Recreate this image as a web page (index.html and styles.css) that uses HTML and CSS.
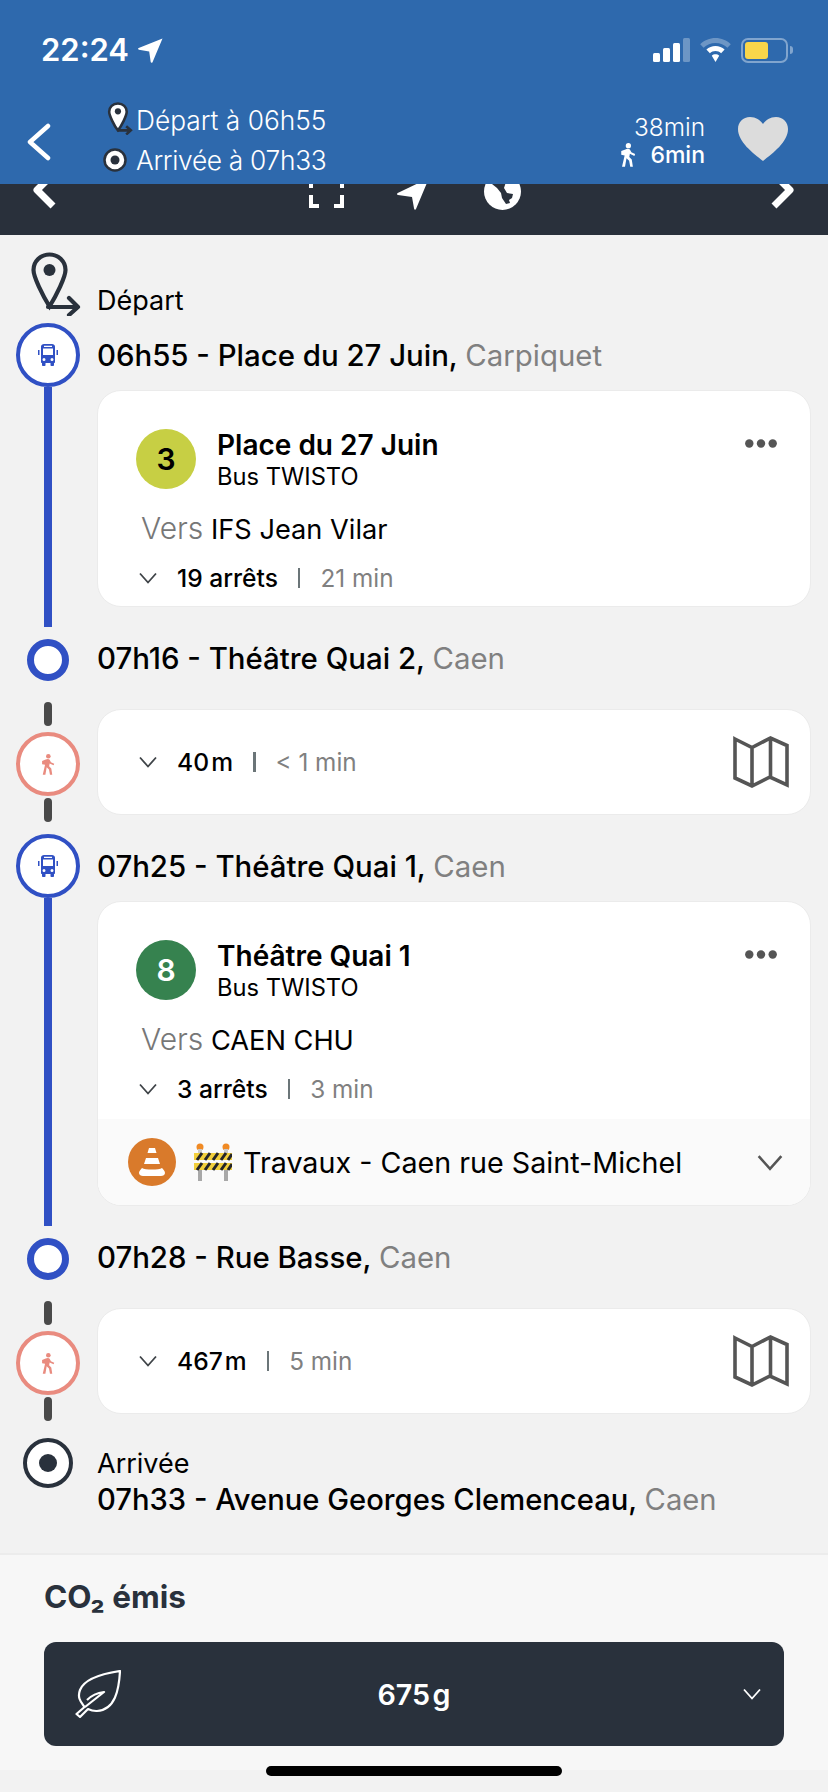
FILE: index.html
```html
<!DOCTYPE html>
<html lang="fr">
<head>
	<meta charset="utf-8">
	<title>Itinéraire</title>
	<link rel="stylesheet" href="styles.css">
</head>
<body>
<svg class="defs" width="0" height="0">
	<symbol id="i-bus" viewBox="0 0 24 24">
		<path fill="currentColor" d="M5 3.500C5 2 6.500 1 8 1h8c1.500 0 3 1 3 2.500V19c0 .6-.4 1-1 1v2.200c0 .5-.4.8-.8.8h-1.900c-.5 0-.8-.3-.8-.8V20H9.500v2.200c0 .5-.3.8-.8.8H6.800c-.4 0-.8-.3-.8-.8V20c-.6 0-1-.4-1-1zM7 5.500V12h10V5.500zM8 2.800v1.200h8V2.800zM8 15a1.500 1.500 0 1 0 0 3 1.500 1.500 0 0 0 0-3zm8 0a1.500 1.500 0 1 0 0 3 1.500 1.500 0 0 0 0-3z"/>
		<path fill="currentColor" d="M2 7h1.500v5H2zM20.500 7H22v5h-1.500z"/>
	</symbol>
	<symbol id="i-walk" viewBox="0 0 24 32">
		<circle cx="12.500" cy="3.500" r="3.500" fill="currentColor"/>
		<path fill="currentColor" d="M8.500 8.500c2-1.200 5-1.200 6 .3l2 3.600 5 2.300-1 2.500-6-2.800-.8 4.200 3.300 3.500 1.500 9.400h-3.500l-1.500-8-3.500-3.200-2 11.200H4L7.500 16.500 3 15.500v-5z"/>
	</symbol>
	<symbol id="i-map" viewBox="0 0 56 52">
		<path fill="none" stroke="currentColor" stroke-width="3.600" d="M2 3l17 8.500L37.500 2 54 9.500V49l-17-8-18 9-17-8zM19 11.500V50M37.500 2v39"/>
	</symbol>
	<symbol id="i-chev" viewBox="0 0 18 12">
		<path fill="none" stroke="currentColor" stroke-width="1.800" d="M1 1.500l8 9 8-9"/>
	</symbol>
	<symbol id="i-dots" viewBox="0 0 32 9">
		<circle cx="4.300" cy="4.500" r="4.200" fill="currentColor"/>
		<circle cx="16" cy="4.500" r="4.200" fill="currentColor"/>
		<circle cx="27.700" cy="4.500" r="4.200" fill="currentColor"/>
	</symbol>
</svg>

<header class="top">
	<div class="status">
		<span class="clock">22:24</span>
		<svg class="loc" viewBox="0 0 25 25"><path fill="#fff" d="M24.500.5L14.500 24.200c-.4.900-1.700.7-1.800-.2l-1.500-10.600L.9 11.700c-1-.2-1.100-1.500-.2-1.800z"/></svg>
		<div class="status-right">
			<svg class="signal" viewBox="0 0 37 24">
				<rect x="0" y="15" width="7" height="9" rx="1.500" fill="#fff"/>
				<rect x="10" y="10" width="7" height="14" rx="1.500" fill="#fff"/>
				<rect x="20" y="5" width="7" height="19" rx="1.500" fill="#fff"/>
				<rect x="30" y="0" width="7" height="24" rx="1.500" fill="#fff" opacity=".3"/>
			</svg>
			<svg class="wifi" viewBox="0 0 31 24">
				<path fill="#fff" opacity=".3" d="M15.500 0C9.600 0 4.200 2.300.2 6.200l3.400 3.600C6.700 6.800 10.900 5 15.500 5s8.800 1.800 11.900 4.800l3.400-3.600C26.800 2.300 21.400 0 15.500 0z"/>
				<path fill="#fff" d="M15.500 8c-3.500 0-6.700 1.400-9.100 3.600l3.500 3.700c1.500-1.400 3.400-2.200 5.600-2.200s4.100.8 5.600 2.200l3.500-3.700C22.200 9.400 19 8 15.500 8zM15.500 16.300c-1.400 0-2.700.5-3.700 1.400l3.700 6.300 3.700-6.300c-1-.9-2.300-1.400-3.700-1.400z"/>
			</svg>
			<div class="battery"><span class="battery-fill"></span></div>
		</div>
	</div>
	<div class="trip">
		<svg class="back" viewBox="0 0 24 38"><path fill="none" stroke="#fff" stroke-width="4.500" stroke-linecap="round" stroke-linejoin="round" d="M21 3L3 19l18 16"/></svg>
		<div class="trip-times">
			<div class="trip-line">
				<svg class="trip-pin" viewBox="0 0 50 64"><path fill="#fff" stroke="#29313c" stroke-width="5" d="M21 3C11 3 4 10 4 19c0 7 10 28 17 36 7-8 17-29 17-36C38 10 31 3 21 3z"/><circle cx="21" cy="18" r="6" fill="#29313c"/><path fill="none" stroke="#29313c" stroke-width="5" d="M20 55h25M37 47l9 8-9 8"/></svg>
				<span>Départ à 06h55</span>
			</div>
			<div class="trip-line trip-line-end">
				<svg class="trip-end" viewBox="0 0 24 24"><circle cx="12" cy="12" r="10.500" fill="#fff" stroke="#29313c" stroke-width="2.500"/><circle cx="12" cy="12" r="4.500" fill="#29313c"/></svg>
				<span>Arrivée à 07h33</span>
			</div>
		</div>
		<div class="trip-length">
			<div class="trip-total">38min</div>
			<div class="trip-walk"><svg class="trip-walk-icon"><use href="#i-walk"/></svg><span>6min</span></div>
		</div>
		<svg class="heart" viewBox="0 0 50 44"><path fill="#dcdcdc" d="M25 44C15 36 0 25 0 12 0 5 5 0 12 0c6 0 10 3 13 7 3-4 7-7 13-7 7 0 12 5 12 12 0 13-15 24-25 32z"/></svg>
	</div>
</header>

<nav class="tools">
	<svg class="tool-side" viewBox="0 0 25 40"><path fill="none" stroke="#fff" stroke-width="7" stroke-linejoin="round" d="M21 4L5 20l16 16"/></svg>
	<div class="tool-mid">
		<svg class="tool-frame" viewBox="0 0 35 50"><path fill="none" stroke="#fff" stroke-width="4" d="M2 24v4M33 24v4M2 35v11h8M33 35v11h-8"/></svg>
		<svg class="tool-arrow" viewBox="0 0 32 50"><path fill="#fff" d="M32 18L19 49c-.4 1-1.700.9-1.900-.2L15 37 1 35c-1.100-.2-1.300-1.500-.3-2z"/></svg>
		<svg class="tool-globe" viewBox="0 0 37 50"><circle cx="18.500" cy="31.500" r="18.500" fill="#fff"/><path fill="#29313c" d="M6 12h22l-5 7-3 9 3 5 6 1-1 4-3 2 1 3-4 1-4-6-1-5-4-5-5-4z"/><path fill="#fff" d="M14 13h7l-2 5-3 1z"/></svg>
	</div>
	<svg class="tool-side" viewBox="0 0 25 40"><path fill="none" stroke="#fff" stroke-width="7" stroke-linejoin="round" d="M4 4l16 16L4 36"/></svg>
</nav>

<main class="route">
	<div class="start">
		<div class="rail rail-start">
			<svg class="start-pin" viewBox="0 0 50 64"><path fill="none" stroke="#29313c" stroke-width="4.200" d="M18.500 2.500C9.500 2.500 2.500 9.500 2.500 18c0 7 9 25 16 36.500C25.500 43 34.500 25 34.500 18c0-8.500-7-15.500-16-15.500z"/><circle cx="18.500" cy="18" r="6" fill="#29313c"/><path fill="none" stroke="#29313c" stroke-width="4.200" stroke-linecap="round" stroke-linejoin="round" d="M17 55h30M38 46l9 9-9 8"/></svg>
		</div>
		<div class="line-text">Départ</div>
	</div>

	<section class="leg">
		<div class="rail">
			<div class="mode mode-bus"><svg class="mode-icon"><use href="#i-bus"/></svg></div>
			<div class="track"></div>
		</div>
		<div class="leg-body">
			<div class="stop-name">06h55 - Place du 27 Juin, <span class="city">Carpiquet</span></div>
			<div class="card">
				<div class="card-head">
					<div class="badge badge-lime">3</div>
					<div class="head-text">
						<div class="head-title">Place du 27 Juin</div>
						<div class="head-sub">Bus TWISTO</div>
					</div>
					<svg class="dots"><use href="#i-dots"/></svg>
				</div>
				<div class="direction"><span class="vers">Vers</span> IFS Jean Vilar</div>
				<div class="meta meta-card">
					<svg class="chev"><use href="#i-chev"/></svg>
					<span class="meta-main">19 arrêts</span><i class="meta-sep"></i><span class="meta-time">21 min</span>
				</div>
			</div>
		</div>
	</section>

	<div class="stop">
		<div class="rail rail-center"><div class="ring"></div></div>
		<div class="stop-name">07h16 - Théâtre Quai 2, <span class="city">Caen</span></div>
	</div>

	<section class="walk">
		<div class="rail">
			<div class="dash"></div>
			<div class="mode mode-walk"><svg class="walk-icon"><use href="#i-walk"/></svg></div>
			<div class="dash dash-low"></div>
		</div>
		<div class="card card-walk">
			<div class="meta">
				<svg class="chev"><use href="#i-chev"/></svg>
				<span class="meta-main">40&#8202;m</span><i class="meta-sep"></i><span class="meta-time">&lt; 1 min</span>
			</div>
			<svg class="map"><use href="#i-map"/></svg>
		</div>
	</section>

	<section class="leg">
		<div class="rail">
			<div class="mode mode-bus"><svg class="mode-icon"><use href="#i-bus"/></svg></div>
			<div class="track"></div>
		</div>
		<div class="leg-body">
			<div class="stop-name">07h25 - Théâtre Quai 1, <span class="city">Caen</span></div>
			<div class="card">
				<div class="card-head">
					<div class="badge badge-green">8</div>
					<div class="head-text">
						<div class="head-title">Théâtre Quai 1</div>
						<div class="head-sub">Bus TWISTO</div>
					</div>
					<svg class="dots"><use href="#i-dots"/></svg>
				</div>
				<div class="direction"><span class="vers">Vers</span> CAEN CHU</div>
				<div class="meta meta-card">
					<svg class="chev"><use href="#i-chev"/></svg>
					<span class="meta-main">3 arrêts</span><i class="meta-sep"></i><span class="meta-time">3 min</span>
				</div>
				<div class="alert">
					<div class="cone">
						<svg viewBox="0 0 48 48"><path fill="#fff" d="M21 10h6l1.500 5h-9zM18 20h12l2 6H16zM14 30c-1 1-3 3-3 5 0 2 2 3 4 3h18c2 0 4-1 4-3 0-2-2-4-3-5-3 2-17 2-20 0z"/></svg>
					</div>
					<svg class="works" viewBox="0 0 38 38">
						<rect x="4" y="24" width="4" height="14" fill="#a8a8a8"/>
						<rect x="30" y="24" width="4" height="14" fill="#a8a8a8"/>
						<circle cx="6" cy="4" r="3.500" fill="#f08a24"/>
						<circle cx="32" cy="4" r="3.500" fill="#f08a24"/>
						<rect x="4" y="6" width="4" height="6" fill="#c9c9c9"/>
						<rect x="30" y="6" width="4" height="6" fill="#c9c9c9"/>
						<rect x="0" y="10" width="38" height="7" fill="#f2cf3c"/>
						<rect x="0" y="20" width="38" height="7" fill="#f2cf3c"/>
						<path stroke="#26262a" stroke-width="3" d="M3 17l5-7M11 17l5-7M19 17l5-7M27 17l5-7M34 17l4-6M3 27l5-7M11 27l5-7M19 27l5-7M27 27l5-7M34 27l4-6"/>
					</svg>
					<span class="alert-text">Travaux - Caen rue Saint-Michel</span>
					<svg class="chev chev-alert"><use href="#i-chev"/></svg>
				</div>
			</div>
		</div>
	</section>

	<div class="stop">
		<div class="rail rail-center"><div class="ring"></div></div>
		<div class="stop-name">07h28 - Rue Basse, <span class="city">Caen</span></div>
	</div>

	<section class="walk">
		<div class="rail">
			<div class="dash"></div>
			<div class="mode mode-walk"><svg class="walk-icon"><use href="#i-walk"/></svg></div>
			<div class="dash dash-low"></div>
		</div>
		<div class="card card-walk">
			<div class="meta">
				<svg class="chev"><use href="#i-chev"/></svg>
				<span class="meta-main">467&#8202;m</span><i class="meta-sep"></i><span class="meta-time">5 min</span>
			</div>
			<svg class="map"><use href="#i-map"/></svg>
		</div>
	</section>

	<div class="finish">
		<div class="rail rail-center rail-finish">
			<svg class="finish-icon" viewBox="0 0 50 50"><circle cx="25" cy="25" r="23" fill="#fff" stroke="#29313c" stroke-width="4"/><circle cx="25" cy="25" r="9" fill="#29313c"/></svg>
		</div>
		<div class="finish-text">
			<div class="line-text">Arrivée</div>
			<div class="stop-name-line">07h33 - Avenue Georges Clemenceau, <span class="city">Caen</span></div>
		</div>
	</div>
</main>

<footer class="co2">
	<h2 class="co2-title">CO₂ émis</h2>
	<div class="co2-box">
		<svg class="leaf" viewBox="0 0 46 48"><path fill="none" stroke="#fff" stroke-width="2.200" stroke-linejoin="round" d="M45 1C44 20 40 40 22 41c-4 .2-7-1-9-2l-8 8-3.500-3 8-7C6 32 2 28 5 20 9 10 25 4 45 1zM10 37l19-15c-8 1-13 4-17 8"/></svg>
		<span class="co2-value">675&#8202;g</span>
		<svg class="chev chev-co2"><use href="#i-chev"/></svg>
	</div>
</footer>
<div class="home-bar"></div>
</body>
</html>
```

FILE: styles.css
```css
html,body{margin:0;padding:0;}
body{position:relative;width:828px;height:1792px;overflow:hidden;background:#f2f2f2;color:#000;font-family:Inter,"Liberation Sans",sans-serif;}
.defs{position:absolute;}
svg{display:block;flex:none;}

/* blue header */
.top{height:184px;background:#2e69ad;color:#fff;position:relative;z-index:1;}
.status{height:100px;display:flex;align-items:center;padding:0 40px 0 41px;box-sizing:border-box;}
.clock{font-size:31px;font-weight:600;line-height:36px;}
.loc{width:25px;height:25px;margin-left:9px;}
.status-right{margin-left:auto;display:flex;align-items:center;}
.signal{width:37px;height:24px;}
.wifi{width:31px;height:24px;margin-left:10px;}
.battery{width:47px;height:25px;margin-left:10px;border:2.500px solid rgba(255,255,255,.4);border-radius:7px;box-sizing:border-box;padding:2px;position:relative;}
.battery:after{content:"";position:absolute;right:-7px;top:6px;width:3px;height:8px;border-radius:0 3px 3px 0;background:rgba(255,255,255,.4);}
.battery-fill{display:block;width:23px;height:100%;background:#f9d64a;border-radius:3px;}

.trip{display:flex;align-items:center;height:84px;padding:0 40px 0 27px;}
.back{width:24px;height:38px;}
.trip-times{margin:-4px 0 0 52px;}
.trip-line{display:flex;align-items:center;height:40px;font-size:26.300px;font-weight:300;color:#fff;}
.trip-line-end{letter-spacing:-.3px;}
.trip-pin{width:26px;height:33px;margin:-4px 3px 0 4px;}
.trip-end{width:24px;height:24px;margin:0 9px 0 0;}
.trip-length{margin:-4px 0 0 auto;text-align:right;}
.trip-total{font-size:24.400px;font-weight:300;line-height:30px;}
.trip-walk{display:flex;align-items:center;justify-content:flex-end;font-size:23px;font-weight:500;line-height:26px;}
.trip-walk-icon{width:18px;height:24px;margin-right:13px;color:#fff;}
.heart{width:50px;height:44px;margin:-6px 0 0 33px;}

/* dark bar, its icons are cut off by the header */
.tools{height:51px;background:#29303b;overflow:hidden;display:flex;align-items:flex-end;justify-content:space-between;padding:0 33px 25px 32px;box-sizing:border-box;}
.tool-side{width:25px;height:40px;}
.tool-mid{display:flex;align-items:flex-end;margin-left:2px;}
.tool-frame{width:35px;height:50px;}
.tool-arrow{width:32px;height:50px;margin-left:53px;}
.tool-globe{width:37px;height:50px;margin-left:55px;}

/* timeline */
.route{padding-right:17px;}
.rail{width:96px;margin-right:1px;flex:none;display:flex;flex-direction:column;align-items:center;}
.rail-center{justify-content:center;}
.start{height:88px;display:flex;align-items:flex-end;box-sizing:border-box;padding-bottom:7px;}
.rail-start{align-items:flex-start;padding-left:31px;box-sizing:border-box;}
.start-pin{width:50px;height:64px;}
.line-text{font-size:27px;line-height:30px;}
.stop-name,.stop-name-line{font-size:29.400px;font-weight:450;white-space:nowrap;}
.stop-name{height:64px;line-height:66px;}
.stop-name-line{font-size:29.200px;line-height:36px;margin-top:3px;}
.city{color:#808080;font-weight:400;}

.leg{display:flex;}
.leg-body{flex:1;padding-bottom:20px;min-width:0;}
.mode{width:64px;height:64px;flex:none;box-sizing:border-box;border-radius:50%;background:#fff;display:flex;align-items:center;justify-content:center;}
.mode-bus{border:4px solid #3050c4;color:#3050c4;}
.mode-walk{border:4px solid #e98b7f;color:#e98b7f;}
.mode-icon{width:24px;height:24px;}
.walk-icon{width:16px;height:21px;}
.track{width:8px;flex:1;background:#3050c4;}
.stop{height:66px;display:flex;}
.stop .stop-name{line-height:63px;height:66px;}
.ring{width:42px;height:42px;box-sizing:border-box;border:7px solid #3050c4;border-radius:50%;background:#fff;}

.walk{display:flex;height:141px;}
.walk .rail{padding-top:9px;box-sizing:border-box;}
.dash{width:8px;height:24px;border-radius:4px;background:#4a4a4a;margin-bottom:6px;}
.dash-low{margin:2px 0 0;}

.card{background:#fff;border:1px solid #ebebeb;border-radius:24px;box-sizing:border-box;margin-top:3px;padding-top:38px;overflow:hidden;}
.card-head{display:flex;align-items:flex-start;padding:0 33px 0 38px;}
.badge{width:60px;height:60px;border-radius:50%;flex:none;display:flex;align-items:center;justify-content:center;font-size:30px;font-weight:600;}
.badge-lime{background:#c7cf44;color:#000;}
.badge-green{background:#36824f;color:#fff;}
.head-text{margin:1px 0 -1px 21px;}
.head-title{font-size:28px;font-weight:600;line-height:31px;}
.head-sub{font-size:23.700px;line-height:31px;}
.dots{width:32px;height:9px;margin:10px 0 0 auto;color:#555;}
.direction{font-size:27.200px;line-height:36px;height:36px;margin:21px 0 0 43px;}
.vers{font-size:30px;line-height:1;font-weight:300;color:#777;}
.meta{display:flex;align-items:center;height:30px;font-size:24.600px;padding-left:41px;}
.meta-card{margin-top:15px;padding-bottom:13px;box-sizing:content-box;}
.chev{width:18px;height:12px;color:#3f4448;margin-right:20px;}
.meta-main{font-weight:500;}
.meta-sep{width:2.500px;height:20px;background:#6b7578;margin:0 20px;}
.meta-time{color:#808080;font-size:24.300px;}

.card-walk{height:106px;margin-top:16px;padding:0 21px 0 0;display:flex;align-items:center;justify-content:space-between;flex:1;}
.map{width:56px;height:52px;color:#555;}

.alert{margin-top:2px;height:86px;background:#fafafa;display:flex;align-items:center;padding:0 27px 0 30px;}
.cone{width:48px;height:48px;border-radius:50%;background:#d97a2b;flex:none;}
.works{width:38px;height:38px;margin:0 11px 0 18px;}
.alert-text{font-size:28.700px;white-space:nowrap;}
.chev-alert{width:26px;height:17px;margin:0 0 0 auto;color:#555;}

.finish{display:flex;height:120px;}
.rail-finish{justify-content:flex-start;padding-top:5px;box-sizing:border-box;}
.finish-icon{width:50px;height:50px;}
.finish-text{padding-top:16px;}

/* bottom block */
.co2{height:217px;box-sizing:border-box;background:#f7f7f7;border-top:2px solid #ececec;padding:24px 44px 0;}
.co2-title{margin:0;font-size:31.500px;font-weight:650;line-height:36px;color:#29313c;}
.co2-box{margin-top:27px;height:104px;background:#29313c;border-radius:12px;display:flex;align-items:center;position:relative;padding:0 23px 0 31px;color:#fff;}
.leaf{width:46px;height:48px;}
.co2-value{position:absolute;left:0;right:0;text-align:center;font-size:28.700px;font-weight:600;}
.chev-co2{margin:0 0 0 auto;color:#fff;}
.home-bar{position:absolute;left:266px;top:1766px;width:296px;height:10px;border-radius:5px;background:#000;}
```
